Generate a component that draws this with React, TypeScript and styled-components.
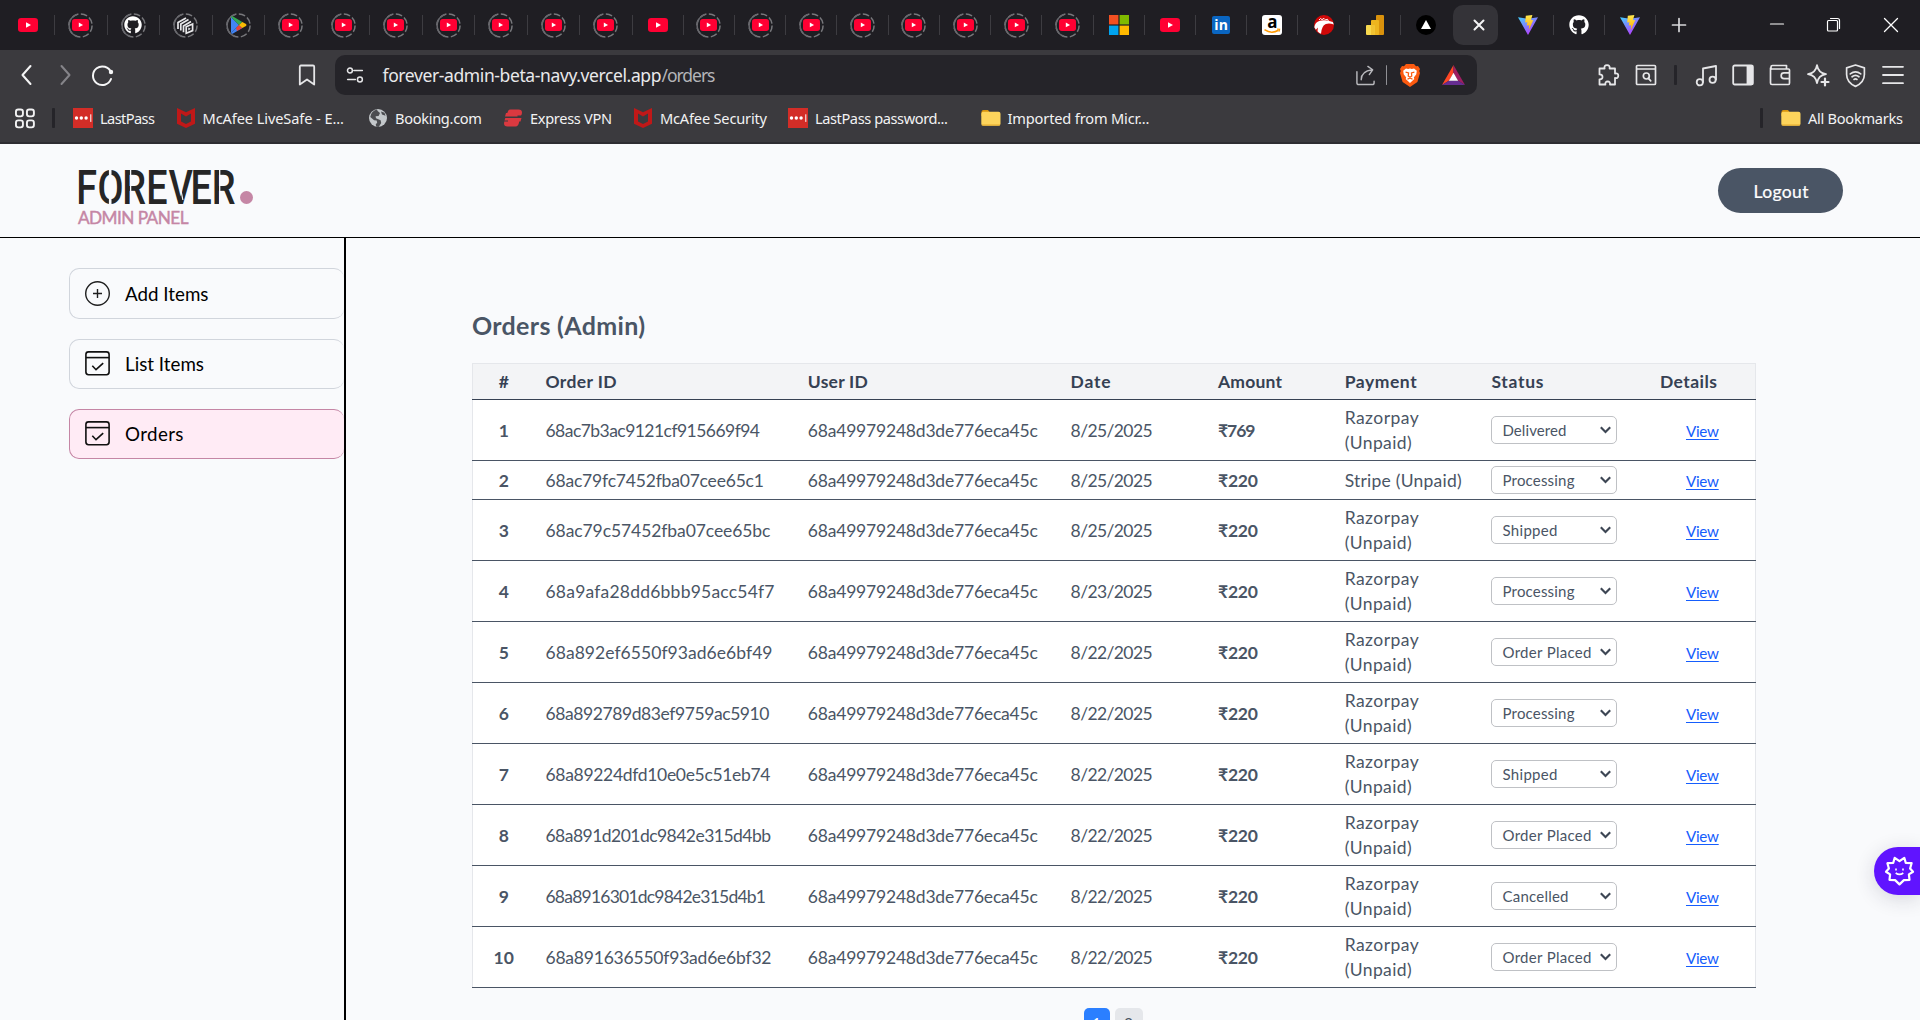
import React, { useLayoutEffect, useRef, useState } from "react";
import styled, { createGlobalStyle, css } from "styled-components";
import { FaGithub } from "react-icons/fa";

const GlobalStyle = createGlobalStyle`
  * { box-sizing: border-box; }
  html, body { margin: 0; padding: 0; overflow: hidden; }
  body { background: #f9fafc; font-family: Lato, "Noto Sans", sans-serif; }
  svg { overflow: visible; }
`;

const chromeFont = '"Noto Sans", "Open Sans", sans-serif';

/* ---------- text that spreads its letters over a given width ---------- */

const FitSpan = styled.span`
  display: inline-block;
  white-space: nowrap;
`;

function Fit({ w, children }: { w: number; children: string }) {
  const ref = useRef<HTMLSpanElement>(null);
  const [spacing, setSpacing] = useState(0);
  useLayoutEffect(() => {
    const el = ref.current;
    if (!el) return;
    el.style.letterSpacing = "0px";
    const natural = el.getBoundingClientRect().width;
    const next = (w + 1 - natural) / Math.max(1, children.length - 1);
    el.style.letterSpacing = `${next}px`;
    setSpacing(next);
  }, [w, children]);
  return (
    <FitSpan ref={ref} style={{ letterSpacing: spacing, marginRight: -spacing }}>
      {children}
    </FitSpan>
  );
}

/* ---------- browser chrome ---------- */

const Window = styled.div`
  width: 1920px;
  height: 1020px;
  overflow: hidden;
  display: flex;
  flex-direction: column;
`;

const TabStrip = styled.div`
  height: 50px;
  flex: none;
  display: flex;
  align-items: center;
  padding-left: 2.6px;
  background: #1f1e23;
`;

const Tab = styled.div<{ $w: number; $line: boolean }>`
  width: ${(p) => p.$w}px;
  height: 20px;
  flex: none;
  display: flex;
  align-items: center;
  justify-content: center;
  border-right: 1px solid ${(p) => (p.$line ? "#3d3c41" : "transparent")};
`;

const ActiveTab = styled.div`
  width: 45px;
  height: 40px;
  flex: none;
  margin: 0 4.8px 0 1px;
  padding-left: 6px;
  border-radius: 10px;
  background: #343338;
  display: flex;
  align-items: center;
  justify-content: center;
`;

const NewTab = styled.div`
  width: 45px;
  display: flex;
  justify-content: center;
`;

const WindowControls = styled.div`
  margin-left: auto;
  padding-right: 1px;
  display: flex;
  & > * {
    width: 57px;
    display: flex;
    justify-content: center;
    align-items: center;
  }
`;

const Toolbar = styled.div`
  height: 50px;
  flex: none;
  display: flex;
  align-items: center;
  background: #3b3a3e;
  color: #e6e6e8;
`;

const NavGroup = styled.div`
  width: 335px;
  padding-left: 8px;
  display: flex;
  align-items: center;
`;

const IconCell = styled.div<{ $w: number }>`
  width: ${(p) => p.$w}px;
  flex: none;
  display: flex;
  align-items: center;
  justify-content: center;
`;

const Grow = styled.div`
  flex: 1;
`;

const AddressBar = styled.div`
  width: 1142px;
  height: 40px;
  border-radius: 10px;
  background: #252429;
  display: flex;
  align-items: center;
  padding-right: 3px;
`;

const Url = styled.div`
  flex: 1;
  padding-left: 7.5px;
  font: 17.5px ${chromeFont};
  line-height: 40px;
  color: #e9e9eb;
  & em {
    font-style: normal;
    color: #b4b4b8;
  }
`;

const ToolIcons = styled.div`
  margin-left: auto;
  padding-right: 9px;
  display: flex;
  align-items: center;
`;

const Bar = styled.div<{ $c: string; $w?: number }>`
  width: ${(p) => p.$w ?? 2}px;
  height: 20px;
  border-radius: 1px;
  background: ${(p) => p.$c};
`;

const Bookmarks = styled.div`
  height: 44px;
  flex: none;
  display: flex;
  align-items: center;
  padding: 0 17px 6px 15px;
  background: #3b3a3e;
  border-bottom: 2px solid #2e2d32;
  color: #f2f2f3;
  font: 14.6px ${chromeFont};
`;

const BookmarkItem = styled.div<{ $w?: number }>`
  width: ${(p) => (p.$w ? p.$w + "px" : "auto")};
  flex: none;
  display: flex;
  align-items: center;
  gap: 7px;
  line-height: 20px;
`;

const BookmarkLead = styled.div`
  width: 58px;
  display: flex;
  align-items: center;
  gap: 16px;
`;

const BookmarksEnd = styled.div`
  margin-left: auto;
  display: flex;
  gap: 18px;
`;

/* ---------- page ---------- */

const Page = styled.div`
  flex: 1;
  min-height: 0;
  display: flex;
  flex-direction: column;
  background: #f9fafc;
  position: relative;
`;

const Header = styled.header`
  height: 94px;
  flex: none;
  display: flex;
  justify-content: space-between;
  padding: 24px 77px 0 77px;
  border-bottom: 1px solid #000;
`;

const Brand = styled.div`
  display: flex;
  flex-direction: column;
  padding-left: 1px;
`;

const BrandSub = styled.div`
  font-size: 17.2px;
  font-weight: 400;
  -webkit-text-stroke: 0.45px #c586a5;
  line-height: 23px;
  color: #c586a5;
`;

const LogoutButton = styled.button`
  width: 125px;
  height: 45px;
  padding: 1px 5px 0 6px;
  border: 0;
  border-radius: 23px;
  background: #4a5565;
  color: #fff;
  font: 400 17.5px Lato, sans-serif;
  -webkit-text-stroke: 0.2px #fff;
`;

const Body = styled.div`
  flex: 1;
  min-height: 0;
  display: flex;
`;

const Sidebar = styled.nav`
  width: 346px;
  flex: none;
  padding: 30px 0 0 69px;
  display: flex;
  flex-direction: column;
  gap: 20px;
  border-right: 2px solid #000;
`;

const SideItem = styled.a<{ $active?: boolean; $h: number }>`
  height: ${(p) => p.$h}px;
  display: flex;
  align-items: center;
  gap: 15px;
  padding-left: 15px;
  border: 1px solid #d1d5dc;
  border-right-width: 0;
  border-radius: 10px;
  font-size: 18.75px;
  line-height: 24px;
  color: #000;
  ${(p) =>
    p.$active &&
    css`
      background: #ffebf5;
      border-color: #c586a5;
    `}
`;

const Main = styled.main`
  flex: 1;
  padding: 72px 164px 0 126px;
`;

const Title = styled.h2`
  margin: 0 0 21px;
  height: 32px;
  font-size: 25px;
  font-weight: 700;
  line-height: 31px;
  color: #4a5565;
`;

const Table = styled.div`
  width: 1284px;
  background: #fff;
  color: #4a5565;
  font-size: 17.5px;
`;

const Row = styled.div<{ $h: number; $head?: boolean }>`
  height: ${(p) => p.$h}px;
  display: grid;
  grid-template-columns: 61.5px 262.3px 262.8px 147.4px 126.7px 146.8px 168.5px 1fr;
  align-items: center;
  padding: 0 1px;
  border-bottom: 1px solid #4a5565;
  box-shadow: inset 1px 0 #e5e7eb, inset -1px 0 #e5e7eb;
  ${(p) =>
    p.$head &&
    css`
      background: #f3f4f6;
      color: #364153;
      font-weight: 700;
      border-bottom-color: #364153;
      box-shadow: inset 1px 1px #e5e7eb, inset -1px 0 #e5e7eb;
    `}
`;

type CellKind = "line" | "lines" | "control" | "link";

const cellTop: Record<CellKind, number> = { line: 3, lines: 1.5, control: 0, link: 3.4 };

const Cell = styled.div<{ $center?: boolean; $bold?: boolean; $kind?: CellKind }>`
  padding-left: ${(p) => (p.$center ? 0 : 11)}px;
  padding-top: ${(p) => cellTop[p.$kind ?? "line"]}px;
  text-align: ${(p) => (p.$center ? "center" : "left")};
  font-weight: ${(p) => (p.$bold ? 700 : "inherit")};
  line-height: 24.6px;
`;

const StatusSelect = styled.div`
  width: 126px;
  height: 28px;
  display: flex;
  align-items: center;
  justify-content: space-between;
  padding: 0 5px 0 10px;
  border: 1px solid #bfc1c5;
  border-radius: 5px;
  background: #fff;
  font-size: 15px;
`;

const ViewLink = styled.a`
  padding-left: 1px;
  font-size: 15.2px;
  color: #155dfc;
  & > span {
    text-decoration: underline;
    text-decoration-thickness: 1px;
    text-underline-offset: 2px;
  }
`;

const Pagination = styled.div`
  display: flex;
  justify-content: center;
  gap: 5px;
  padding-top: 20px;
  padding-right: 2px;
`;

const PageButton = styled.div<{ $on?: boolean }>`
  width: ${(p) => (p.$on ? 26 : 28)}px;
  height: 36px;
  border-radius: 5px;
  padding-top: 3px;
  text-align: center;
  font-size: 15.5px;
  line-height: 24px;
  background: ${(p) => (p.$on ? "#2b7fff" : "#e5e7eb")};
  color: ${(p) => (p.$on ? "#fff" : "#4a5565")};
`;

const Assistant = styled.div`
  position: absolute;
  right: 0;
  top: 703px;
  width: 46px;
  height: 48px;
  padding-left: 11px;
  display: flex;
  align-items: center;
  border-radius: 24px 0 0 24px;
  background: #6014ff;
  box-shadow: 0 4px 20px rgba(30, 30, 60, 0.16);
`;

/* ---------- icons ---------- */

const YouTube = ({ w }: { w: number }) => (
  <svg width={w} height={w * 0.7} viewBox="0 0 20 14">
    <rect width="20" height="14" rx="3.2" fill="#ff0033" />
    <path d="M8 4.2 13 7l-5 2.8z" fill="#fff" />
  </svg>
);

const Cubes = () => (
  <svg width="17" height="17" viewBox="0 0 17 17" fill="none" stroke="#e8e8ea" strokeWidth="1.7">
    <path d="M1 12V5.5L9 1M3.8 13.6V7L11.5 2.6M6.5 15.2V9L14 4.5" />
    <path d="M9.2 9.8 15.6 7v6.6l-6.4 2.6z" />
    <path d="m11.3 10.6 2.4 1.2-2.4 1.8z" fill="#e8e8ea" stroke="none" />
  </svg>
);

const Play = () => (
  <svg width="17" height="18" viewBox="0 0 17 18">
    <path d="M1 1v16l8-8z" fill="#4285f4" />
    <path d="M1 1 9 9l3.3-3.1L2.6.3Q1.3 0 1 1z" fill="#34a853" />
    <path d="M1 17 9 9l3.3 3.1-9.7 5.6Q1.3 18 1 17z" fill="#4285f4" />
    <path d="M6 11.9 9 9l3.3 3.1-5.3 3z" fill="#ea4335" />
    <path d="M12.3 5.9 16 8q1 1 0 2l-3.7 2.1L9 9z" fill="#fbbc04" />
  </svg>
);

const Windows = () => (
  <svg width="20" height="20" viewBox="0 0 20 20">
    <path fill="#f25022" d="M0 0h9.4v9.4H0z" />
    <path fill="#7fba00" d="M10.6 0H20v9.4h-9.4z" />
    <path fill="#00a4ef" d="M0 10.6h9.4V20H0z" />
    <path fill="#ffb900" d="M10.6 10.6H20V20h-9.4z" />
  </svg>
);

const Badge = styled.div`
  width: 18px;
  height: 18px;
  border-radius: 2px;
  background: #0a66c2;
  color: #fff;
  font: 700 14px/17px "Open Sans", sans-serif;
  text-align: center;
`;

const AmazonBadge = styled.div`
  width: 20px;
  height: 20px;
  border-radius: 3px;
  background: #fff;
  color: #000;
  display: grid;
  justify-items: center;
  font: 700 17px/14px "Open Sans", sans-serif;
  & > * {
    grid-area: 1 / 1;
  }
`;

const Amazon = () => (
  <AmazonBadge>
    <span>a</span>
    <svg width="20" height="20" viewBox="0 0 20 20">
      <path d="M2.5 14.7q7 4.7 14 .6" fill="none" stroke="#ff9900" strokeWidth="1.6" />
      <path d="m15 14 2.6.3-.6 2.4" fill="none" stroke="#ff9900" strokeWidth="1.2" />
    </svg>
  </AmazonBadge>
);

const RedBall = () => (
  <svg width="20" height="20" viewBox="0 0 20 20">
    <circle cx="10" cy="10" r="10" fill="#cf0808" />
    <path d="M.3 12.2Q1 7 5.8 5.7q6-1.5 13 1.4l1 2.5q-4.4-1.9-8-.5-4.3 2-4.8 9.7-2.2-1-3.5-2.6l.4-3.7-2 2.3z" fill="#fff" />
    <path d="m5 5 1.5-1.5L8 4.6l2-1.2 1.5 1.5 2-.6.8 1.6" stroke="#fff" fill="none" />
  </svg>
);

const PowerBI = () => (
  <svg width="18" height="20" viewBox="0 0 18 20">
    <rect x="10" width="8" height="20" rx="1" fill="#d9920c" />
    <rect x="5" y="5" width="8" height="15" rx="1" fill="#edb51f" />
    <rect y="10" width="8.5" height="10" rx="1" fill="#f8d94f" />
    <path d="M5 10h3.5v10H5z" fill="#f1c232" />
  </svg>
);

const Vercel = () => (
  <svg width="20" height="20" viewBox="0 0 20 20">
    <circle cx="10" cy="10" r="10" fill="#000" />
    <path d="m10 5 5 9H5z" fill="#fff" />
  </svg>
);

const Vite = () => (
  <svg width="20" height="20" viewBox="0 0 20 20">
    <defs>
      <linearGradient id="viteA" x1="0" y1="0" x2=".7" y2="1">
        <stop offset="0" stopColor="#41d1ff" />
        <stop offset="1" stopColor="#bd34fe" />
      </linearGradient>
      <linearGradient id="viteB" x1="0" y1="0" x2="0" y2="1">
        <stop offset="0" stopColor="#ffea4f" />
        <stop offset="1" stopColor="#ffa800" />
      </linearGradient>
    </defs>
    <path d="m0 2.3 10 1.5 10-1.5L10 20z" fill="url(#viteA)" />
    <path d="M7.8.8 14.4 0l-1.5 5.2 2.4-.3-4.6 10.3.5-5-2.5.4.7-3.3-2.2.3z" fill="url(#viteB)" />
  </svg>
);

const RingBox = styled.div`
  display: grid;
  place-items: center;
  & > * {
    grid-area: 1 / 1;
  }
`;

const Ringed = ({ children }: { children: React.ReactNode }) => (
  <RingBox>
    <svg width="25" height="25" viewBox="0 0 25 25" fill="none" stroke="#77777b" strokeWidth="1.5">
      <circle cx="12.5" cy="12.5" r="11.6" strokeDasharray="6.6 2.51" />
      <path d="M9 1.5A11.6 11.6 0 0 0 9 23.5" stroke="#68686d" />
    </svg>
    {children}
  </RingBox>
);

const Line = ({ d, w = 22, s = 1.6, c = "currentColor", children }: { d?: string; w?: number; s?: number; c?: string; children?: React.ReactNode }) => (
  <svg width={w} height={w} viewBox="0 0 22 22" fill="none" stroke={c} strokeWidth={s} strokeLinecap="round" strokeLinejoin="round">
    {d && <path d={d} />}
    {children}
  </svg>
);

const Brave = () => (
  <svg width="20" height="23" viewBox="0 0 20 23">
    <path d="m6 0-2 2.2-2-.2L0 5l.8 2L0 9l2.6 9L10 23l7.4-5L20 9l-.8-2 .8-2-2-3-2 .2L14 0z" fill="#fb5a10" />
    <path
      d="M6 4.5 3.2 6.7l.5 3.5 2.5 3.3-.5 1.6 4.3 4 4.3-4-.5-1.6 2.5-3.3.5-3.5L14 4.5l-2.2.4L10 4.5l-1.8.4z"
      fill="#fff"
    />
    <path d="m5.6 8.2 3 .7-.4 3 1.8 1.4 1.8-1.4-.4-3 3-.7M7.5 15.3l2.5-1.4 2.5 1.4" fill="none" stroke="#fb5a10" strokeWidth="1.2" />
  </svg>
);

const Bat = () => (
  <svg width="23" height="20" viewBox="0 0 23 20">
    <path d="M11.5 0v8L7.2 15.5 0 20z" fill="#ff4724" />
    <path d="M11.5 0 23 20l-7.2-4.5L11.5 8z" fill="#9e1f63" />
    <path d="m0 20 7.2-4.5h8.6L23 20z" fill="#662d91" />
    <path d="m11.5 7.8 4.6 8H6.9z" fill="#fff" />
  </svg>
);

const LastPass = () => (
  <svg width="20" height="20" viewBox="0 0 20 20">
    <rect width="20" height="20" fill="#d32d27" />
    <g fill="#fff">
      <circle cx="3.5" cy="10" r="1.7" />
      <circle cx="8.3" cy="10" r="1.7" />
      <circle cx="13.1" cy="10" r="1.7" />
      <rect x="17.3" y="6.3" width="1" height="7.6" />
    </g>
  </svg>
);

const McAfee = () => (
  <svg width="20" height="20" viewBox="0 0 20 20">
    <path d="M1 0 10 4.3 19 0v15.8L10 20l-9-4.2zM5 5.4v8l5 2.5 5-2.5v-8l-5 3z" fill="#c01818" fillRule="evenodd" />
  </svg>
);

const Globe = () => (
  <svg width="20" height="20" viewBox="0 0 20 20">
    <circle cx="10" cy="10" r="9" fill="#c3c7ca" />
    <path d="M9 1.5Q3 3 2.3 9l3.8 3.2 2.6.4.5 2.5-1.5 1 .6 2.6 2.4.2 2.5-4-.6-2.6-4.6-2-.4-2 3-.3 1.4-3-2.4-2zM13 3.5l1 3 3.5 1.3-1-3z" fill="#4b4c50" />
  </svg>
);

const Express = () => (
  <svg width="20" height="20" viewBox="0 0 20 20" fill="#da3940">
    <path d="M7.5 1.5h8q3.5 0 3.5 3 0 2-1 3h-3.5v1H2L3 5H4.3Q5 1.5 7.5 1.5z" />
    <path d="M12.5 18.5h-8q-3.5 0-3.5-3l.3-2H5v-1H1.5l.8-2.6H18.5l-1 3.6h-1.3q-.7 5-3.7 5z" />
  </svg>
);

const Folder = () => (
  <svg width="20" height="20" viewBox="0 0 20 20">
    <path d="M.5 4q0-2 2-2H7l1.7 2.2V8H.5z" fill="#d9960f" />
    <rect x=".3" y="3.8" width="19.2" height="14" rx="2" fill="#fdd45c" />
    <path d="M.8 17h18.2" stroke="#e5ab2b" strokeWidth="1" />
  </svg>
);

/* Stencil lettering: condensed word mark with thin cuts through O, R and V. */
const ForeverLogo = () => (
  <svg width="157" height="38" viewBox="0 0 157 38">
    <text
      transform="translate(0 36) scale(.795 1)"
      x="-2.2 24.6 55.8 86 113.7 141.4 168.2"
      fontFamily="Roboto"
      fontWeight="500"
      fontSize="47.5"
      fill="#262626"
    >
      FOREVER
    </text>
    <g stroke="#f9fafc" fill="none">
      <path d="M32.2 0v38" strokeWidth="2.6" />
      <path d="M52.6 1v37M141.7 1v37" strokeWidth="1.3" />
      <path d="m101.3 14 3.6 18" strokeWidth="1.2" />
    </g>
  </svg>
);

const LogoRow = styled.div`
  display: flex;
  align-items: flex-end;
  height: 38px;
`;

const LogoDot = styled.i`
  width: 13px;
  height: 13px;
  margin: 0 0 2.5px 5px;
  border-radius: 50%;
  background: #c586a5;
`;

const PlusCircle = () => (
  <svg width="25" height="25" viewBox="0 0 25 25" fill="none" stroke="#1f1f1f" strokeWidth="1.4">
    <circle cx="12.5" cy="12.5" r="11.8" />
    <path d="M12.5 8v9M8 12.5h9" />
  </svg>
);

const CheckIcon = styled.svg`
  width: 25px;
  height: 25px;
  margin-bottom: 2px;
`;

const CheckBox = () => (
  <CheckIcon viewBox="0 0 25 25" fill="none" stroke="#111" strokeWidth="1.6">
    <rect x=".9" y=".9" width="23.2" height="22.8" rx="2.6" />
    <path d="M1 6.6h23" />
    <path d="m7.3 14.8 3.7 3.9 7.2-6.6" />
  </CheckIcon>
);

const Chevron = () => (
  <svg width="11" height="8" viewBox="0 0 11 8" fill="none" stroke="#3d4654" strokeWidth="2.1">
    <path d="m.8 1.2 4.7 4.9 4.7-4.9" />
  </svg>
);

const SunFace = () => (
  <svg width="29" height="30" viewBox="0 0 29 30" fill="none" stroke="#fff" strokeWidth="2.2" strokeLinejoin="round">
    <path d="m9.7 1.8 4.8 3.3 4.8-3.3 1.5 5.2 5.8.2-1.5 5.3 2.9 3.3-4.1 2.6.6 5.4-5.6.3-4.4 4.3-4.4-4.3-5.6-.3.6-5.4L1 15.8l2.9-3.3-1.5-5.3L8.2 7z" />
    <path d="M11 12.5v2M18 12.5v2M10.7 17q3.8 2.8 7.6 0" strokeWidth="1.6" />
  </svg>
);

/* ---------- data ---------- */

const ringedYt = (
  <Ringed>
    <YouTube w={17} />
  </Ringed>
);
const plainYt = <YouTube w={20} />;

const firstTabs = [
  plainYt,
  ringedYt,
  <Ringed><FaGithub size={18} color="#fff" /></Ringed>,
  <Ringed><Cubes /></Ringed>,
  <Ringed><Play /></Ringed>,
  ...Array(7).fill(ringedYt),
];

const secondTabs = [
  plainYt,
  ...Array(8).fill(ringedYt),
  <Windows />,
  plainYt,
  <Badge>in</Badge>,
  <Amazon />,
  <RedBall />,
  <PowerBI />,
  <Vercel />,
];

const lastTabs = [<Vite />, <FaGithub size={20} color="#fff" />, <Vite />];

const bookmarks: [React.ReactNode, string, number, number][] = [
  [<LastPass />, "LastPass", 54, 102.5],
  [<McAfee />, "McAfee LiveSafe - E...", 140.5, 192.5],
  [<Globe />, "Booking.com", 86, 135],
  [<Express />, "Express VPN", 81, 130],
  [<McAfee />, "McAfee Security", 106, 155],
  [<LastPass />, "LastPass password...", 132, 192.5],
  [<Folder />, "Imported from Micr...", 141, 180],
];

const headings: [string, number][] = [
  ["Order ID", 70],
  ["User ID", 59],
  ["Date", 39],
  ["Amount", 63],
  ["Payment", 71],
  ["Status", 51],
  ["Details", 56],
];

const orders: [string, number, string, string, string][] = [
  ["68ac7b3ac9121cf915669f94", 213.5, "8/25/2025", "₹769", "Delivered"],
  ["68ac79fc7452fba07cee65c1", 217.5, "8/25/2025", "₹220", "Processing"],
  ["68ac79c57452fba07cee65bc", 224, "8/25/2025", "₹220", "Shipped"],
  ["68a9afa28dd6bbb95acc54f7", 228, "8/23/2025", "₹220", "Processing"],
  ["68a892ef6550f93ad6e6bf49", 226, "8/22/2025", "₹220", "Order Placed"],
  ["68a892789d83ef9759ac5910", 223, "8/22/2025", "₹220", "Processing"],
  ["68a89224dfd10e0e5c51eb74", 224, "8/22/2025", "₹220", "Shipped"],
  ["68a891d201dc9842e315d4bb", 224.5, "8/22/2025", "₹220", "Order Placed"],
  ["68a8916301dc9842e315d4b1", 219.5, "8/22/2025", "₹220", "Cancelled"],
  ["68a891636550f93ad6e6bf32", 225, "8/22/2025", "₹220", "Order Placed"],
];

const statusWidth: Record<string, number> = {
  Delivered: 63,
  Processing: 71,
  Shipped: 54,
  "Order Placed": 88,
  Cancelled: 65,
};

export default function App() {
  return (
    <Window>
      <GlobalStyle />
      <TabStrip>
        {firstTabs.map((icon, i) => (
          <Tab key={i} $w={52.5} $line>{icon}</Tab>
        ))}
        {secondTabs.map((icon, i) => (
          <Tab key={i} $w={51.22} $line={i < secondTabs.length - 1}>{icon}</Tab>
        ))}
        <ActiveTab>
          <Line w={22} s={2} c="#f4f4f5" d="m6.5 6.5 9 9m0-9-9 9" />
        </ActiveTab>
        {lastTabs.map((icon, i) => (
          <Tab key={i} $w={51.2} $line>{icon}</Tab>
        ))}
        <NewTab>
          <Line s={1.7} c="#d8d8da" d="M11 4.5v13M4.5 11h13" />
        </NewTab>
        <WindowControls>
          <div><Line s={1.2} c="#fff" d="M4.5 10h13" /></div>
          <div>
            <Line s={1.2} c="#fff" d="M7.5 4.5h7q2 0 2 2v8">
              <rect x="4.5" y="6.5" width="10" height="10.5" rx="1" />
            </Line>
          </div>
          <div><Line s={1.3} c="#fff" d="m4.5 4.5 13 13m0-13-13 13" /></div>
        </WindowControls>
      </TabStrip>

      <Toolbar>
        <NavGroup>
          <IconCell $w={38}><Line s={2} c="#f5f5f6" d="M14.5 2 6.5 11l8 9" /></IconCell>
          <IconCell $w={38}><Line s={2} c="#858489" d="m7.5 2 8 9-8 9" /></IconCell>
          <IconCell $w={38}>
            <Line s={2} c="#f5f5f6" d="M19 8.5A9.3 9.3 0 1 0 19 15">
              <circle cx="19" cy="8" r="2.2" fill="#f5f5f6" stroke="none" />
            </Line>
          </IconCell>
          <Grow />
          <IconCell $w={57}><Line s={1.8} d="M5 1.5h12q1.2 0 1.2 1.2V20.5l-7.2-5-7.2 5V2.7Q3.8 1.5 5 1.5z" /></IconCell>
        </NavGroup>
        <AddressBar>
          <IconCell $w={40}>
            <Line w={18} s={1.8} d="M9.5 5.5h10.5M2 16.5h9.5">
              <circle cx="4.8" cy="5.5" r="3" />
              <circle cx="17" cy="16.5" r="3" />
            </Line>
          </IconCell>
          <Url>
            <Fit w={278}>forever-admin-beta-navy.vercel.app</Fit>
            <em><Fit w={53}>/orders</Fit></em>
          </Url>
          <IconCell $w={40}>
            <Line w={21} s={1.5} c="#b9b9bd" d="M2 7v11.5q0 2 2 2h14q2 0 2-2V17M6.5 15.5q0-9 11.5-10.5M13.5 1.5 18.5 5l-3.5 5" />
          </IconCell>
          <IconCell $w={3}><Bar $c="#909095" $w={1.5} /></IconCell>
          <IconCell $w={44}><Brave /></IconCell>
          <IconCell $w={42}><Bat /></IconCell>
        </AddressBar>
        <ToolIcons>
          <IconCell $w={37.5}>
            <Line s={1.8} d="M3 4.5h4.6q-.8-3.3 2.4-3.3t2.6 3.3H18v5q3.3-.6 3.3 2.2T18 14v6.5h-5q.4-3-2.3-3t-2.3 3H2.5v-5.2q3 .2 3-2.4t-3-2.5V4.5z" />
          </IconCell>
          <IconCell $w={37}>
            <Line s={1.7} d="M2.5 1.5h17q1 0 1 1v17q0 1-1 1h-17q-1 0-1-1v-17q0-1 1-1zM1.5 5h19M13.4 14.4l2.3 2.4">
              <circle cx="11.3" cy="12" r="3" />
            </Line>
          </IconCell>
          <IconCell $w={22}><Bar $c="#252429" $w={3} /></IconCell>
          <IconCell $w={39}>
            <Line s={1.8} d="M8 18V4.5L21 2v13.5">
              <circle cx="4.8" cy="18.3" r="3.1" />
              <circle cx="17.6" cy="15.8" r="3.1" />
            </Line>
          </IconCell>
          <IconCell $w={35}>
            <Line s={1.8}>
              <rect x="1.2" y="1.5" width="19.5" height="19" rx="1.5" />
              <path d="M15.5 2h5v18h-5z" fill="currentColor" />
            </Line>
          </IconCell>
          <IconCell $w={40}>
            <Line s={1.7} d="M2 5.3V3q0-1.5 1.5-1.5h14V5M1.5 5h18q1 0 1 1v13q0 1.5-1 1.5H3q-1.5 0-1.5-1.5V4M20.5 8.8H15q-2.8 0-2.8 2.6v.6q0 2.6 2.8 2.6h5.5" />
          </IconCell>
          <IconCell $w={36.5}>
            <Line s={1.8} d="M10 1.2q1.2 7.8 9 9-7.8 1.2-9 9-1.2-7.8-9-9 7.8-1.2 9-9z">
              <circle cx="18" cy="18" r="5" fill="#3b3a3e" stroke="none" />
              <path d="M18 14.5v7M14.5 18h7" strokeWidth="2.2" />
            </Line>
          </IconCell>
          <IconCell $w={37.5}>
            <Line w={23} s={1.6} d="m11 1 8.5 2.7V10q0 7.5-8.5 11.4Q2.5 17.5 2.5 10V3.7zM6 9.5q5-3.8 10 0M7.7 12.2q3.3-2.5 6.6 0M9.6 14.8q1.4-1 2.8 0" />
          </IconCell>
          <IconCell $w={37}><Line s={1.8} d="M1 2.8h20M1 11h20M1 19.2h20" /></IconCell>
        </ToolIcons>
      </Toolbar>

      <Bookmarks>
        <BookmarkLead>
          <Line w={21} s={2}>
            <rect x="1" y="1.5" width="7.3" height="7.3" rx="2.4" />
            <rect x="12.5" y="1.5" width="7.3" height="7.3" rx="2.4" />
            <rect x="1" y="13" width="7.3" height="7.3" rx="2.4" />
            <rect x="12.5" y="13" width="7.3" height="7.3" rx="2.4" />
          </Line>
          <Bar $c="#252429" $w={3} />
        </BookmarkLead>
        {bookmarks.map(([icon, label, w, cell], i) => (
          <BookmarkItem key={i} $w={cell}>
            {icon}
            <Fit w={w}>{label}</Fit>
          </BookmarkItem>
        ))}
        <BookmarksEnd>
          <Bar $c="#252429" $w={3} />
          <BookmarkItem>
            <Folder />
            <Fit w={94}>All Bookmarks</Fit>
          </BookmarkItem>
        </BookmarksEnd>
      </Bookmarks>

      <Page>
        <Header>
          <Brand>
            <LogoRow>
              <ForeverLogo />
              <LogoDot />
            </LogoRow>
            <BrandSub><Fit w={109.5}>ADMIN PANEL</Fit></BrandSub>
          </Brand>
          <LogoutButton><Fit w={54}>Logout</Fit></LogoutButton>
        </Header>
        <Body>
          <Sidebar>
            <SideItem $h={51}><PlusCircle /><Fit w={82.5}>Add Items</Fit></SideItem>
            <SideItem $h={50}><CheckBox /><Fit w={78}>List Items</Fit></SideItem>
            <SideItem $h={50} $active><CheckBox /><Fit w={57.5}>Orders</Fit></SideItem>
          </Sidebar>
          <Main>
            <Title><Fit w={172}>Orders (Admin)</Fit></Title>
            <Table>
              <Row $h={37} $head>
                <Cell $center>#</Cell>
                {headings.map(([label, w]) => (
                  <Cell key={label}><Fit w={w}>{label}</Fit></Cell>
                ))}
              </Row>
              {orders.map(([id, w, date, amount, status], i) => (
                <Row key={id} $h={i === 1 ? 39 : 61}>
                  <Cell $center $bold>{i + 1}</Cell>
                  <Cell><Fit w={w}>{id}</Fit></Cell>
                  <Cell><Fit w={229}>68a49979248d3de776eca45c</Fit></Cell>
                  <Cell><Fit w={81}>{date}</Fit></Cell>
                  <Cell $bold><Fit w={amount === "₹769" ? 36.5 : 39}>{amount}</Fit></Cell>
                  {i === 1 ? (
                    <Cell><Fit w={116}>Stripe (Unpaid)</Fit></Cell>
                  ) : (
                    <Cell $kind="lines">
                      <Fit w={73}>Razorpay</Fit>
                      <br />
                      <Fit w={66}>(Unpaid)</Fit>
                    </Cell>
                  )}
                  <Cell $kind="control">
                    <StatusSelect>
                      <Fit w={statusWidth[status]}>{status}</Fit>
                      <Chevron />
                    </StatusSelect>
                  </Cell>
                  <Cell $center $kind="link"><ViewLink><Fit w={32}>View</Fit></ViewLink></Cell>
                </Row>
              ))}
            </Table>
            <Pagination>
              <PageButton $on>1</PageButton>
              <PageButton>2</PageButton>
            </Pagination>
          </Main>
        </Body>
        <Assistant><SunFace /></Assistant>
      </Page>
    </Window>
  );
}
